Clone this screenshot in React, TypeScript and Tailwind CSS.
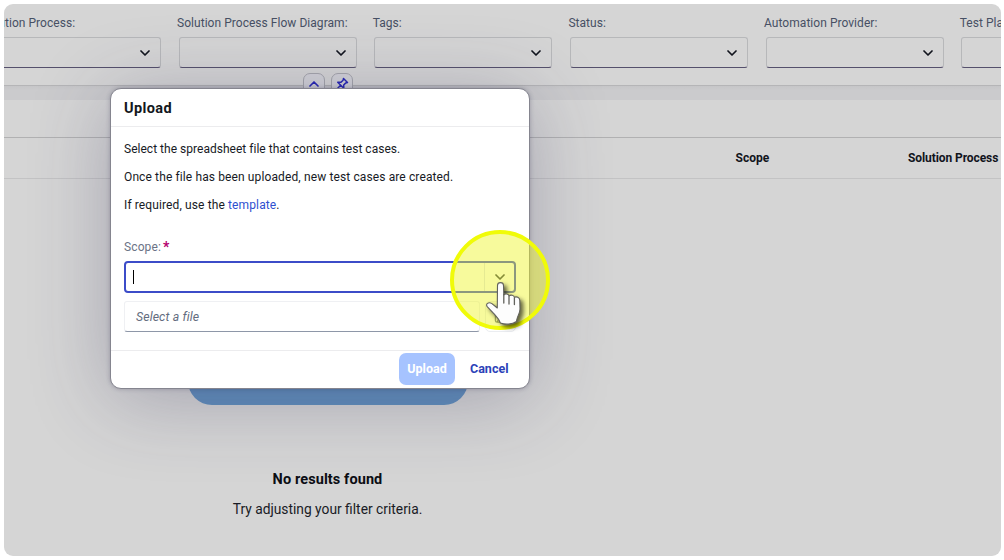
import { ReactNode } from "react";

function Chevron({ className = "" }: { className?: string }) {
  return (
    <svg viewBox="0 0 10 6" className={`h-[6px] w-[10px] ${className}`} fill="none" stroke="currentColor" strokeWidth="1.7" strokeLinecap="round" strokeLinejoin="round">
      <path d="M1 1 L5 5 L9 1" />
    </svg>
  );
}

function FilterField({ label }: { label: string }) {
  return (
    <div className="w-[178px] shrink-0">
      <div className="-ml-[1.5px] h-[20px] whitespace-nowrap text-[12px] leading-[20px] tracking-[0.04px] text-[#475064]">{label}</div>
      <div className="mt-[4px] flex h-[31px] items-center justify-end rounded-[3px] border border-[#b7b8ba] border-b-[#55506c] pr-[10px] text-[#11141d]">
        <Chevron />
      </div>
    </div>
  );
}

function BarToggle({ children }: { children: ReactNode }) {
  return (
    <div className="flex h-[22px] w-[22px] justify-center rounded-[7px] border border-[#a5a6ac] bg-[#d3d3d8] pt-[3px] text-[#2727b5]">
      {children}
    </div>
  );
}

function Hand() {
  return (
    <svg viewBox="0 0 46 50" className="absolute left-[30px] top-[48px] h-[50px] w-[46px] drop-shadow-[3px_3px_2px_rgba(0,0,0,0.6)]">
      <path
        d="M17.5 7.5 C17.5 3.6 23.5 3.6 23.5 7.5 L23.8 17 C25 15.2 28.6 15.6 29 18 C30.8 16.4 34 17.2 34.4 19.4 C36.4 18 39.8 19.6 39.8 22.4 L40 31 C40 35.5 37.2 37.6 36.4 43.5 C32 46.6 25 46.8 20.4 45 C19 40.5 16.4 38.6 13.6 35.4 L7.2 28.6 C5.2 26 8.6 23.6 11.6 25.4 L17.3 30 Z"
        fill="#fdfdfd"
        stroke="#62625c"
        strokeWidth="1.1"
        strokeLinejoin="round"
      />
      <path d="M23.8 16.5 V25 M29 18.5 V26 M34.4 20 V26.5" stroke="#62625c" strokeWidth="1.3" fill="none" strokeLinecap="round" />
    </svg>
  );
}

export default function App() {
  return (
    <div className="h-[560px] w-[1004px] overflow-hidden bg-white py-[4px] pl-[4px] pr-[3px] font-['Roboto','Noto_Sans',sans-serif]">
      <div className="relative h-[552px] overflow-hidden rounded-[9px] bg-[#d5d5d5]">
        <div className="h-[82px] border-b border-[#b5b5b7] pt-[9px]">
          <div className="-ml-[21.2px] flex gap-[17.7px]">
            <FilterField label="Solution Process:" />
            <FilterField label="Solution Process Flow Diagram:" />
            <FilterField label="Tags:" />
            <FilterField label="Status:" />
            <FilterField label="Automation Provider:" />
            <FilterField label="Test Plan:" />
          </div>
        </div>
        <div className="h-[13.5px] bg-gradient-to-b from-[#c6c6c8] to-[#cbcbcd] to-30%" />
        <div className="h-[38.5px] border-b border-[#b1b1b2]" />
        <div className="flex h-[41px] items-center border-b border-[#c3c3c4] pl-[731.5px] text-[12px] font-bold text-[#11141c]">
          <div className="w-[172.5px]">Scope</div>
          <div className="whitespace-nowrap tracking-[-0.08px]">Solution Process</div>
        </div>
        <div className="flex w-[647px] flex-col items-center">
          <div className="mt-[25px] h-[201px] w-[280px] rounded-[24px] bg-[#618fbd]" />
          <div className="mt-[64px] text-[14.5px] font-bold leading-[22px] tracking-[0.1px] text-[#0c0e14]">No results found</div>
          <div className="mt-[7px] text-[13.8px] leading-[22px] text-[#191b25]">Try adjusting your filter criteria.</div>
        </div>

        <div className="absolute left-[299px] top-[69px] flex gap-[6px]">
          <BarToggle>
            <Chevron className="mt-[4px] rotate-180" />
          </BarToggle>
          <BarToggle>
            <svg viewBox="0 0 14 14" className="h-[14px] w-[14px]" fill="none" stroke="currentColor" strokeWidth="1.5" strokeLinejoin="round" strokeLinecap="round">
              <path d="M8.5 1.5 L12.5 5.5 L10.8 5.9 L8.7 8 L8.8 11.3 L2.7 5.2 L6 5.3 L8.1 3.2 Z M5.6 8.3 L1.5 12.5" />
            </svg>
          </BarToggle>
        </div>

        <div className="absolute left-[106px] top-[84px] flex h-[301px] w-[420px] flex-col rounded-[11px] border border-[#85858f] bg-white shadow-[0_10px_80px_0_rgba(50,45,85,0.3),0_0_4px_rgba(50,45,75,0.3)]">
          <div className="h-[38px] border-b border-[#ececee] pl-[13px] text-[14.5px] font-bold leading-[39px] tracking-[0.4px] text-[#131720]">Upload</div>
          <div className="flex flex-col px-[13px] pt-[12px] text-[12px] leading-[20px] tracking-[0.12px] text-[#171a25]">
            <p className="tracking-[0.02px]">Select the spreadsheet file that contains test cases.</p>
            <p className="mt-[8px]">Once the file has been uploaded, new test cases are created.</p>
            <p className="mt-[8px]">
              If required, use the <span className="text-[#2e50d0]">template</span>.
            </p>
            <div className="mt-[22px] flex text-[#6b7386]">
              Scope:<span className="ml-[2px] text-[14px] font-bold text-[#b4006e]">*</span>
            </div>
            <div className="mt-[4px] flex h-[32px] w-[392px] items-center justify-between rounded-[4px] border-2 border-[#3c4cc8] pl-[7px]">
              <div className="h-[14px] w-px bg-black" />
              <div className="flex h-full w-[30px] items-center justify-center border-l border-[#dfe2ef] text-[#303748]">
                <Chevron />
              </div>
            </div>
            <div className="mt-[8px] flex gap-[5px]">
              <div className="h-[31px] w-[356px] rounded-[3px] border border-[#eff0f3] border-b-[#8e97a8] pl-[11px] text-[12.3px] italic leading-[30px] text-[#636c7e]">Select a file</div>
              <div className="flex h-[31px] w-[31px] items-center justify-center rounded-[5px] border border-[#ebedf1] text-[#626d7d]">
                <svg viewBox="0 0 14 14" className="h-[12px] w-[13px]" fill="none" stroke="currentColor" strokeWidth="1.3" strokeLinejoin="round">
                  <path d="M1 11 V3 H5 L6.5 5 H11 V7 M1 11 Q1 13 3 13 L5 9 H13 L11 13 H3" />
                </svg>
              </div>
            </div>
          </div>
          <div className="mt-auto flex h-[38px] items-center justify-end gap-[15px] border-t border-[#ececee] pb-px pr-[21px] text-[12.5px] font-bold">
            <div className="flex h-[32px] w-[56px] items-center justify-center rounded-[7px] bg-[#a6c3ff] text-white">Upload</div>
            <div className="w-[38px] whitespace-nowrap text-[#2c42b8]">Cancel</div>
          </div>
        </div>

        <div className="absolute left-[446px] top-[226px] h-[100px] w-[100px]">
          <div className="h-full w-full rounded-full border-4 border-[#f0fb08] bg-[#edf324]/45" />
          <Hand />
        </div>
      </div>
    </div>
  );
}
